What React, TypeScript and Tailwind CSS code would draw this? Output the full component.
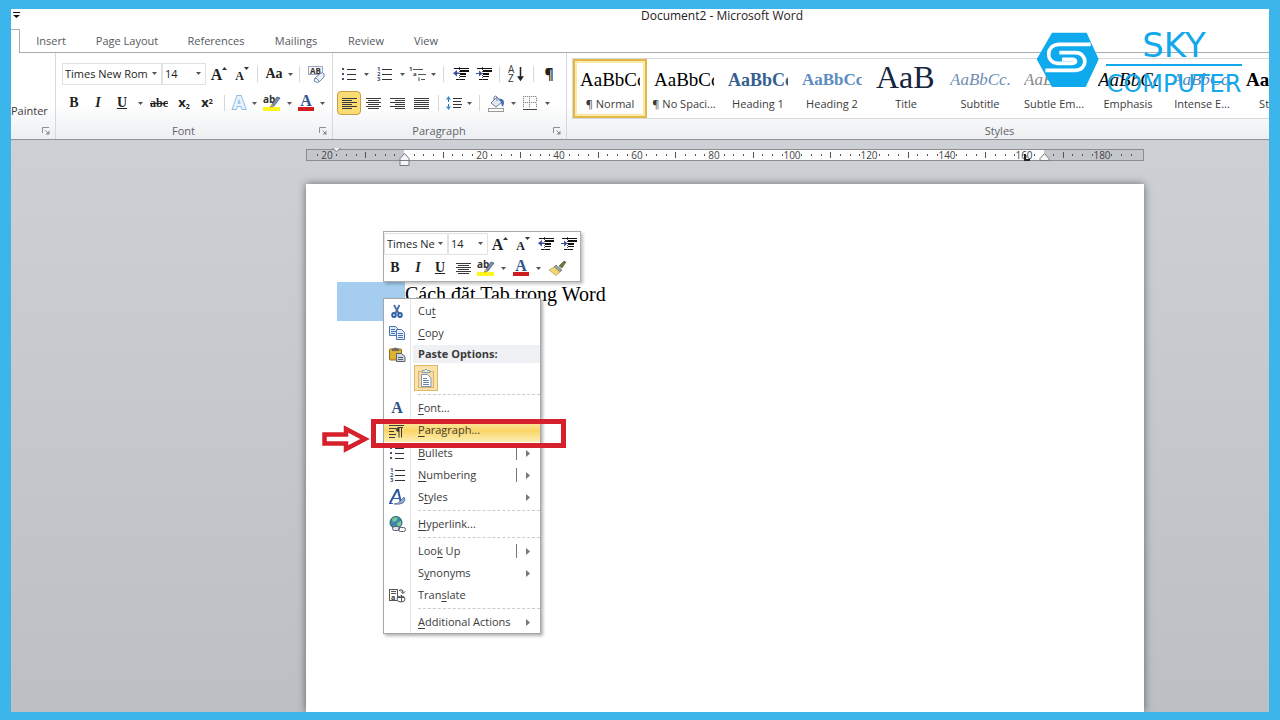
import React from 'react';
import clsx from 'clsx';

const SERIF = 'font-["Liberation_Serif",serif]';

const Arrow = ({className}: { className?: string }) => (
    <button aria-label="More options" className={clsx("flex h-6 items-center justify-center", className)}>
        <svg width="5" height="3" viewBox="0 0 5 3"><path d="M0 0h5L2.5 3z" fill="#555"/></svg>
    </button>
)

interface ToolProps {
    label: string
    className?: string
    active?: boolean
    children: React.ReactNode
}

const Tool = ({label, className, active, children}: ToolProps) => (
    <button aria-label={label} className={clsx("flex h-6 shrink-0 items-center justify-center text-[#222]",
        active && "rounded-sm border border-[#c9a04a] bg-[#fbdc74]", className)}>
        {children}
    </button>
)

const Sep = ({className}: { className?: string }) => (
    <div className={clsx("flex h-4 shrink-0 justify-center", className)}>
        <div className="w-px bg-[#d5d7da]"/>
    </div>
)

interface ComboProps {
    label: string
    value: string
    className?: string
}

const Combo = ({label, value, className}: ComboProps) => (
    <div className={clsx("relative flex h-[22px] shrink-0 border border-[#dfe1e4] bg-white", className)}>
        <select aria-label={label} defaultValue={value}
                className="w-full appearance-none overflow-hidden bg-transparent pl-[2px] pr-3 text-[11px] text-[#1e1e1e]">
            <option>{value}</option>
        </select>
        <svg className="pointer-events-none absolute right-1 top-2" width="5" height="3" viewBox="0 0 5 3">
            <path d="M0 0h5L2.5 3z" fill="#555"/>
        </svg>
    </div>
)

const Letter = ({children, className}: { children: React.ReactNode, className?: string }) => (
    <span className={clsx(SERIF, "leading-none", className)}>{children}</span>
)

const GrowIcon = () => (
    <span className="flex items-start">
        <Letter className="pt-[2px] text-[16px] font-bold">A</Letter>
        <svg width="5" height="5" viewBox="0 0 5 5"><path d="M0 5h5L2.5 2z" fill="#333"/></svg>
    </span>
)

const ShrinkIcon = () => (
    <span className="flex items-start">
        <Letter className="pt-1 text-[12px] font-bold">A</Letter>
        <svg width="5" height="5" viewBox="0 0 5 5"><path d="M0 1h5L2.5 4z" fill="#333"/></svg>
    </span>
)

const HighlightIcon = () => (
    <svg width="18" height="18" viewBox="0 0 18 18">
        <rect y="13" width="17" height="4" fill="#fdf51d"/>
        <text x="0" y="9" fontSize="10" fontWeight="bold" fontFamily="Open Sans, sans-serif" fill="#333">ab</text>
        <path d="M8 12l6-9 3 1-6 8-4 1z" fill="#7f93b5" stroke="#3b4a66" strokeWidth=".7"/>
        <path d="M7 13l1.500-3 2 2z" fill="#e3b93a"/>
    </svg>
)

const FontColorIcon = () => (
    <svg width="18" height="18" viewBox="0 0 18 18">
        <rect x="1" y="13" width="16" height="4" fill="#d01c1f"/>
        <text x="9" y="12" textAnchor="middle" fontSize="16" fontWeight="bold" fontFamily="Liberation Serif, serif"
              fill="#2f5290">A</text>
    </svg>
)

const ClearIcon = () => (
    <svg width="18" height="18" viewBox="0 0 18 18">
        <rect x=".5" y="1.500" width="14" height="8" fill="#f4f6fa" stroke="#9aa7c2"/>
        <text x="7.500" y="8.500" textAnchor="middle" fontSize="8" fontWeight="bold" fontFamily="Open Sans, sans-serif"
              fill="#333">AB</text>
        <path d="M7 13l6-5q2-1 3 1v3l-5 5q-3 1-5-1z" fill="#eef1f8" stroke="#7484ad"/>
        <path d="M7 13q2 0 4 3" fill="none" stroke="#7484ad"/>
    </svg>
)

const OutlineA = () => (
    <svg width="18" height="18" viewBox="0 0 18 18">
        <text x="9" y="15" textAnchor="middle" fontSize="18" fontWeight="bold" fontFamily="Open Sans, sans-serif"
              fill="#eaf4fd" stroke="#8dbce4" strokeWidth="2" paintOrder="stroke">A</text>
    </svg>
)

const BulletsIcon = () => (
    <svg width="14" height="14" viewBox="0 0 14 14">
        {[2, 7, 12].map((y) => (
            <g key={y}>
                <rect y={y - 1} width="2" height="2" fill="#44546f"/>
                <path d={`M5 ${y + .5}h9`} stroke="#333"/>
            </g>
        ))}
    </svg>
)

const NumberingIcon = () => (
    <svg width="15" height="15" viewBox="0 0 15 15">
        {[2, 7, 12].map((y, i) => (
            <g key={y}>
                <text x="0" y={y + 2} fontSize="6" fontWeight="bold" fontFamily="Open Sans, sans-serif"
                      fill="#3a4d78">{i + 1}</text>
                <path d={`M5 ${y + .5}h10`} stroke="#333"/>
            </g>
        ))}
    </svg>
)

const MultilevelIcon = () => (
    <svg width="18" height="16" viewBox="0 0 18 16">
        <g fontSize="6" fontWeight="bold" fontFamily="Open Sans, sans-serif" fill="#444">
            <text x="0" y="5">1</text>
            <text x="4" y="10">a</text>
            <text x="9" y="15">i</text>
        </g>
        <path d="M4 3.500h10M9 8.500h8M12 13.500h4" stroke="#555"/>
    </svg>
)

const IndentIcon = ({right}: { right?: boolean }) => (
    <svg width="16" height="14" viewBox="0 0 16 14">
        <path d="M1 1.500h15M7 9.500h6M3 12.500h9" stroke="#111"/>
        <path d="M7 4h9M7 7h6" stroke="#111" strokeWidth="2"/>
        <path d="M6.500 0v14" stroke="#555" strokeDasharray="1 1"/>
        <path d={right ? "M0 6h3V3.500L6.500 6.500 3 9.500V7H0z" : "M6.500 5.500H4V3L0 6.300 4 9.500V7h2.500z"} fill="#3f4fa0"/>
    </svg>
)

const SortIcon = () => (
    <svg width="16" height="18" viewBox="0 0 16 18">
        <text x="0" y="8" fontSize="10" fontFamily="Open Sans, sans-serif" fill="#333">A</text>
        <text x="0" y="17" fontSize="10" fontFamily="Open Sans, sans-serif" fill="#333">Z</text>
        <path d="M12.500 2v12M10.500 12l2 3 2-3z" stroke="#222" strokeWidth="1.500" fill="#222"/>
    </svg>
)

type Align = "left" | "center" | "right" | "justify"

const ALIGN_PATHS: Record<Align, string> = {
    left: "M0 .5h15M0 2.500h10M0 4.500h15M0 6.500h10M0 8.500h15M0 10.500h10",
    center: "M0 .5h15M2 2.500h11M0 4.500h15M2 6.500h11M0 8.500h15M2 10.500h11",
    right: "M0 .5h15M5 2.500h10M0 4.500h15M5 6.500h10M0 8.500h15M5 10.500h10",
    justify: "M0 .5h15M0 2.500h15M0 4.500h15M0 6.500h15M0 8.500h15M0 10.500h15",
}

const AlignIcon = ({align}: { align: Align }) => (
    <svg width="15" height="11" viewBox="0 0 15 11"><path d={ALIGN_PATHS[align]} stroke="#3a3a3a"/></svg>
)

const SpacingIcon = () => (
    <svg width="16" height="16" viewBox="0 0 16 16">
        <path d="M2.500 4v3M2.500 9v3" stroke="#3a6ea8"/>
        <path d="M0 4.500L2.500 1 5 4.500zM0 11.500L2.500 15 5 11.500z" fill="#3a8cc8"/>
        <path d="M7 3.500h9M7 6.500h8M7 9.500h9M7 12.500h8" stroke="#333"/>
    </svg>
)

const ShadingIcon = () => (
    <svg width="18" height="17" viewBox="0 0 18 17">
        <path d="M3 8l6-6 5 5-6 5z" fill="#e4e9f1" stroke="#6c7c98"/>
        <path d="M6 5V2q1-2 3 0v4" fill="none" stroke="#6c7c98"/>
        <path d="M10 4q6-1 6 4l-1 4q-2-2-2-5z" fill="#3e6eb4"/>
        <rect x=".5" y="13.500" width="15" height="3" fill="#fff" stroke="#999"/>
    </svg>
)

const BorderIcon = () => (
    <svg width="14" height="14" viewBox="0 0 14 14">
        <path d="M.5 0v12M6.500 0v12M13.500 0v12M0 .5h14M0 6.500h14" stroke="#8a8a8a" strokeDasharray="1 1"/>
        <path d="M.5 0v12M6.500 0v12M13.500 0v12M0 .5h14M0 6.500h14" stroke="#dcdcdc" strokeDasharray="1 1" strokeDashoffset="1"/>
        <path d="M0 13.500h14" stroke="#444"/>
    </svg>
)

const LaunchIcon = () => (
    <svg width="8" height="8" viewBox="0 0 8 8">
        <path d="M.5 6V.5H7M3.500 3.500L6 6" fill="none" stroke="#8d9196"/>
        <path d="M7.500 3.500v4h-4z" fill="#8d9196"/>
    </svg>
)

const BrushIcon = () => (
    <svg width="17" height="15" viewBox="0 0 17 15">
        <path d="M10 5l5-5 2 1-4 6z" fill="#6f7a3a" stroke="#4d5628" strokeWidth=".6"/>
        <path d="M7 4l6 5-2 2-6-5z" fill="#8fa8a0" stroke="#55685f" strokeWidth=".6"/>
        <path d="M5 6l6 5-4 3.500L0 9z" fill="#f2d777" stroke="#a58a35" strokeWidth=".6"/>
    </svg>
)

const ScissorsIcon = () => (
    <svg width="12" height="14" viewBox="0 0 12 14" fill="none" stroke="#3060a8">
        <path d="M3 1l4.500 8M8.500 1L4.500 9" stroke="#4a6ea8" strokeWidth="1.800"/>
        <ellipse cx="3" cy="11" rx="1.800" ry="2" strokeWidth="2"/>
        <ellipse cx="9" cy="11" rx="1.800" ry="2" strokeWidth="2"/>
    </svg>
)

const CopyIcon = () => (
    <svg width="16" height="14" viewBox="0 0 16 14" stroke="#4d74b2">
        <path d="M.5.5h6l2 2v7h-8z" fill="#dfe9f8"/>
        <path d="M2 3.500h4M2 5.500h5M2 7.500h4"/>
        <path d="M7.500 3.500h5l3 3v7h-8z" fill="#e9f0fb"/>
        <path d="M9 7.500h5M9 9.500h5M9 11.500h5"/>
    </svg>
)

const PasteIcon = () => (
    <svg width="17" height="15" viewBox="0 0 17 15">
        <rect x=".5" y="2" width="12" height="11" rx="1" fill="#e0b232" stroke="#8c6d1a"/>
        <path d="M3 3V1.500h2q1.500-2 3 0h2V4H3z" fill="#6c6a5c"/>
        <path d="M7.500 6.500h5l3.500 3v5H7.500z" fill="#cfd6df" stroke="#55606f"/>
        <path d="M9 10.500h5M9 12.500h5" stroke="#55606f"/>
    </svg>
)

const ClipboardIcon = () => (
    <svg width="16" height="20" viewBox="0 0 16 20">
        <rect x=".5" y="3.500" width="15" height="16" fill="#f5deab" stroke="#d9b46a"/>
        <path d="M4 4.500V2.500h2.500q1.500-3 3 0H12v2z" fill="#e6edf0" stroke="#86a0a8"/>
        <path d="M3.500 6.500h6l3.500 3.500v8.500H3.500z" fill="#fff" stroke="#8195b4"/>
        <path d="M5 10.500h4M5 12.500h6M5 14.500h6M5 16.500h6" stroke="#6b84b0"/>
    </svg>
)

const ParagraphIcon = () => (
    <svg width="16" height="14" viewBox="0 0 16 14">
        <path d="M0 1.500h15M0 4.500h7M0 7.500h5M0 10.500h7M0 13.500h6" stroke="#3c3c3c"/>
        <path d="M10 3.500v10M12.500 3.500v10M14 3.500h-5" stroke="#3c3c3c"/>
        <path d="M10 3q-3 .5-3 2.500T10 8z" fill="#3c3c3c"/>
    </svg>
)

const StylesIcon = () => (
    <svg width="17" height="16" viewBox="0 0 17 16">
        <path d="M1 14L8 1h1l3 13" fill="none" stroke="#2f57a0" strokeWidth="2"/>
        <path d="M4 9.500h7M0 14.500h4" stroke="#2f57a0"/>
        <path d="M5 15q5 0 7-4l3-3 1 3-2 3q-4 2-9 1z" fill="#8fa9cf" stroke="#44608f" strokeWidth=".7"/>
    </svg>
)

const GlobeIcon = () => (
    <svg width="17" height="16" viewBox="0 0 17 16">
        <circle cx="7" cy="6.500" r="6" fill="#3e86a8" stroke="#29607c"/>
        <path d="M3 3q3-3 6-1l-2 3-3 1zM8 7l4-2v4l-3 2z" fill="#7ccb8f"/>
        <g fill="#dfe3e8" stroke="#555f6c">
            <rect x="3.500" y="10.500" width="7" height="4" rx="2"/>
            <rect x="9.500" y="11.500" width="7" height="4" rx="2" fill="none"/>
        </g>
    </svg>
)

const TranslateIcon = () => (
    <svg width="17" height="15" viewBox="0 0 17 15">
        <rect x=".5" y="1.500" width="8" height="11" fill="#fff" stroke="#555"/>
        <path d="M2 3.500h5M2 5.500h5" stroke="#555"/>
        <text x="2" y="12" fontSize="7" fontWeight="bold" fontFamily="Open Sans, sans-serif" fill="#333">a</text>
        <path d="M10 2.500q4-2 4 2M12 3.500l2 2 2-2" fill="none" stroke="#333"/>
        <ellipse cx="12" cy="11" rx="4" ry="3" fill="#fff" stroke="#555"/>
        <path d="M12.500 7v7M9 9.500h6" stroke="#555"/>
    </svg>
)

const GroupLabel = ({label, launch}: { label: string, launch?: boolean }) => (
    <div className="flex h-4 items-center text-[11px] text-[#5f6369]">
        <span className="flex-1 pr-2 text-center">{label}</span>
        {launch && (
            <button aria-label={`${label || "Clipboard"} settings`} className="mr-[5px]">
                <LaunchIcon/>
            </button>
        )}
    </div>
)

interface StyleItem {
    name: string
    sample: string
    className: string
    active?: boolean
}

const STYLES: StyleItem[] = [
    {name: "¶ Normal", sample: "AaBbCc", className: "text-[19px] text-black", active: true},
    {name: "¶ No Spaci...", sample: "AaBbCc", className: "text-[19px] text-black"},
    {name: "Heading 1", sample: "AaBbCc", className: "text-[18px] font-bold text-[#365f91]"},
    {name: "Heading 2", sample: "AaBbCc", className: "text-[17px] font-bold text-[#5c8cc0]"},
    {name: "Title", sample: "AaB", className: "text-[32px] text-[#17263d]"},
    {name: "Subtitle", sample: "AaBbCc.", className: "text-[17px] italic text-[#6f8db3]"},
    {name: "Subtle Em...", sample: "AaBbCc.", className: "text-[17px] italic text-[#8a8a8a]"},
    {name: "Emphasis", sample: "AaBbCc", className: "text-[19px] italic text-black"},
    {name: "Intense E...", sample: "AaBbCc.", className: "text-[17px] italic text-[#4f81bd]"},
    {name: "Strong", sample: "AaBbCc", className: "text-[19px] font-bold text-black"},
]

const StyleCard = ({name, sample, className, active}: StyleItem) => (
    <button className={clsx("flex w-[74px] shrink-0 flex-col items-center",
        active ? "border-2 border-[#e3b84b] bg-white shadow-[inset_0_0_0_2px_#fbe9a6]" : "border-2 border-transparent")}>
        <span className={clsx(SERIF, "h-9 w-[60px] overflow-hidden whitespace-nowrap text-left",
            sample === "AaB" ? "leading-8" : "leading-[38px]", className)}>{sample}</span>
        <span className="whitespace-nowrap text-[11px] leading-[14px] text-[#3b3b3b]">{name}</span>
    </button>
)

const Ribbon = () => (
    <div className="flex h-[87px] border-b border-[#8f9398] bg-linear-to-b from-white from-60% to-[#eceef1]">
        <div className="flex w-[45px] shrink-0 flex-col justify-between border-r border-[#d5d8dc]">
            <span className="pt-[50px] text-[11px] leading-4 text-[#3b3b3b]">Painter</span>
            <GroupLabel label="" launch/>
        </div>
        <div className="flex w-[277px] shrink-0 flex-col justify-between border-r border-[#d5d8dc]">
            <div className="flex flex-col gap-[5px] pl-[6px] pt-[9px]">
                <div className="flex h-6 items-center">
                    <Combo label="Font" value="Times New Rom" className="w-[100px]"/>
                    <Combo label="Font size" value="14" className="w-[44px]"/>
                    <Tool label="Grow font" className="w-[26px]"><GrowIcon/></Tool>
                    <Tool label="Shrink font" className="w-[20px]"><ShrinkIcon/></Tool>
                    <Sep className="w-[10px]"/>
                    <Tool label="Change case" className="w-[24px]">
                        <Letter className="text-[14px] font-bold">Aa</Letter>
                    </Tool>
                    <Arrow className="w-[8px]"/>
                    <Sep className="w-[10px]"/>
                    <Tool label="Clear formatting" className="w-[26px]"><ClearIcon/></Tool>
                </div>
                <div className="flex h-6 items-center">
                    <Tool label="Bold" className="w-6"><Letter className="text-[14px] font-bold">B</Letter></Tool>
                    <Tool label="Italic" className="w-6"><Letter className="text-[14px] font-bold italic">I</Letter></Tool>
                    <Tool label="Underline" className="w-6">
                        <Letter className="text-[14px] font-bold underline">U</Letter>
                    </Tool>
                    <Arrow className="w-3"/>
                    <Tool label="Strikethrough" className="w-[26px]">
                        <Letter className="text-[12px] font-bold line-through">abc</Letter>
                    </Tool>
                    <Tool label="Subscript" className="w-6">
                        <span className="text-[13px] font-bold">x<sub className="text-[7px]">2</sub></span>
                    </Tool>
                    <Tool label="Superscript" className="w-[22px]">
                        <span className="text-[13px] font-bold">x<sup className="text-[7px]">2</sup></span>
                    </Tool>
                    <Sep className="w-3"/>
                    <Tool label="Text effects" className="w-[18px]"><OutlineA/></Tool>
                    <Arrow className="w-3"/>
                    <Tool label="Highlight" className="w-6"><HighlightIcon/></Tool>
                    <Arrow className="w-[10px]"/>
                    <Tool label="Font color" className="w-6"><FontColorIcon/></Tool>
                    <Arrow className="w-2"/>
                </div>
            </div>
            <GroupLabel label="Font" launch/>
        </div>
        <div className="flex w-[234px] shrink-0 flex-col justify-between border-r border-[#d5d8dc]">
            <div className="flex flex-col gap-[5px] pl-1 pt-[9px]">
                <div className="flex h-6 items-center">
                    <Tool label="Bullets" className="w-6"><BulletsIcon/></Tool>
                    <Arrow className="w-[10px]"/>
                    <Tool label="Numbering" className="w-[26px]"><NumberingIcon/></Tool>
                    <Arrow className="w-[10px]"/>
                    <Tool label="Multilevel list" className="w-[22px]"><MultilevelIcon/></Tool>
                    <Arrow className="w-2"/>
                    <Sep className="w-3"/>
                    <Tool label="Decrease indent" className="w-6"><IndentIcon/></Tool>
                    <Tool label="Increase indent" className="w-[22px]"><IndentIcon right/></Tool>
                    <Sep className="w-2"/>
                    <Tool label="Sort" className="w-[26px]"><SortIcon/></Tool>
                    <Sep className="w-2"/>
                    <Tool label="Show marks" className="w-6">
                        <span className="text-[14px] font-bold leading-none">¶</span>
                    </Tool>
                </div>
                <div className="flex h-6 items-center">
                    <Tool label="Align left" className="w-6" active><AlignIcon align="left"/></Tool>
                    <Tool label="Center" className="w-6"><AlignIcon align="center"/></Tool>
                    <Tool label="Align right" className="w-6"><AlignIcon align="right"/></Tool>
                    <Tool label="Justify" className="w-6"><AlignIcon align="justify"/></Tool>
                    <Sep className="w-[10px]"/>
                    <Tool label="Line spacing" className="w-[22px]"><SpacingIcon/></Tool>
                    <Arrow className="w-2"/>
                    <Sep className="w-3"/>
                    <Tool label="Shading" className="w-6"><ShadingIcon/></Tool>
                    <Arrow className="w-2"/>
                    <Tool label="Borders" className="w-[26px]"><BorderIcon/></Tool>
                    <Arrow className="w-2"/>
                </div>
            </div>
            <GroupLabel label="Paragraph" launch/>
        </div>
        <div className="flex min-w-0 flex-1 flex-col justify-between pl-[5px] pt-[5px]">
            <div className="flex h-[61px] overflow-hidden border-y border-l border-[#d5d8dc] bg-white">
                {STYLES.map((style) => <StyleCard key={style.name} {...style}/>)}
            </div>
            <div className="pl-[166px]">
                <GroupLabel label="Styles"/>
            </div>
        </div>
    </div>
)

const UNIT = 77.5
const ZERO = 98

const Ruler = () => {
    const ticks = []
    for (let i = -9; i <= 75; i++) {
        if (i % 8 === 0) continue
        const x = Math.round(ZERO + i * UNIT / 8)
        if (x < 3 || x > 836) continue
        ticks.push(<rect key={i} x={x} y={i % 4 === 0 ? 4 : 6} width="1" height={i % 4 === 0 ? 6 : 2} fill="#555"/>)
    }
    return (
        <svg width="838" height="20" viewBox="0 0 838 20" className="block">
            <rect x=".5" y="1.500" width="837" height="11" fill="#c3c7cc" stroke="#8a8e93"/>
            <rect x="98" y="2" width="640" height="10" fill="#fdfdfd"/>
            {ticks}
            <g fontSize="10" fontFamily="Open Sans, sans-serif" fill="#444" textAnchor="middle">
                {[-1, 1, 2, 3, 4, 5, 6, 7, 8, 9].map((n) => (
                    <text key={n} x={Math.round(ZERO + n * UNIT)} y="11">{Math.abs(n) * 20}</text>
                ))}
            </g>
            <g fill="#f4f5f6" stroke="#777b80">
                <path d="M26 -3.500h9v3l-4.500 4L26 -.5z"/>
                <path d="M98.500 5.500l4.500 5v7h-9v-7zM94 12.500h9"/>
                <path d="M738.500 5.500l4.500 5v2h-9v-2z"/>
            </g>
            <path d="M719 6v6h5" fill="none" stroke="#222" strokeWidth="2"/>
        </svg>
    )
}

const MiniToolbar = () => (
    <div className="absolute left-[77px] top-[47px] flex w-[198px] flex-col border border-[#a9adb2] bg-white pb-px shadow-[2px_2px_3px_rgba(0,0,0,0.25)]">
        <div className="flex h-6 items-center">
            <Combo label="Mini font" value="Times New" className="w-[64px]"/>
            <Combo label="Mini font size" value="14" className="w-10"/>
            <Tool label="Grow" className="w-6"><GrowIcon/></Tool>
            <Tool label="Shrink" className="w-[22px]"><ShrinkIcon/></Tool>
            <Tool label="Decrease indent" className="w-6"><IndentIcon/></Tool>
            <Tool label="Increase indent" className="w-[22px]"><IndentIcon right/></Tool>
        </div>
        <div className="flex h-6 items-center">
            <Tool label="Bold" className="w-[22px]"><Letter className="text-[14px] font-bold">B</Letter></Tool>
            <Tool label="Italic" className="w-6"><Letter className="text-[14px] font-bold italic">I</Letter></Tool>
            <Tool label="Underline" className="w-5">
                <Letter className="text-[14px] font-bold underline">U</Letter>
            </Tool>
            <Tool label="Center" className="w-[26px]"><AlignIcon align="center"/></Tool>
            <Tool label="Highlight" className="w-5"><HighlightIcon/></Tool>
            <Arrow className="w-[14px]"/>
            <Tool label="Font color" className="w-[22px]"><FontColorIcon/></Tool>
            <Arrow className="w-3"/>
            <Tool label="Format painter" className="w-[26px]"><BrushIcon/></Tool>
        </div>
    </div>
)

interface MenuRowProps {
    text: string
    // index of the access key letter
    hot: number
    icon?: React.ReactNode
    sub?: boolean
    split?: boolean
    active?: boolean
}

const MenuRow = ({text, hot, icon, sub, split, active}: MenuRowProps) => (
    <button className={clsx("flex w-full items-center text-left text-[11px] text-[#3b3b3b]",
        active ? "h-[23px] bg-linear-to-b from-[#fdeeb5] via-[#fad667] to-[#fdeeb0]" : "h-[22px]")}>
        <span className="flex w-[26px] justify-center">{icon}</span>
        <span className="flex-1 whitespace-nowrap pl-2">
            {text.slice(0, hot)}<span className="underline underline-offset-2">{text[hot]}</span>{text.slice(hot + 1)}
        </span>
        {split && <span className="mr-[9px] h-[14px] w-px bg-[#777]"/>}
        {(sub || split) && (
            <svg className="mr-[10px]" width="4" height="7" viewBox="0 0 4 7"><path d="M0 0v7l4-3.500z" fill="#777"/></svg>
        )}
    </button>
)

const Divider = () => <div className="my-[2px] ml-[34px] border-t border-dashed border-[#c9ccd0]"/>

const ContextMenu = () => (
    <div className="absolute left-[77px] top-[114px] w-[158px] border border-[#a3a6aa] bg-white bg-[linear-gradient(to_right,transparent_26px,#e2e4e7_26px,#e2e4e7_27px,transparent_27px)] pt-px shadow-[2px_2px_3px_rgba(0,0,0,0.3)]">
        <MenuRow text="Cut" hot={2} icon={<ScissorsIcon/>}/>
        <MenuRow text="Copy" hot={0} icon={<CopyIcon/>}/>
        <div className="flex h-5 items-center text-[11px] font-bold text-[#3b3b3b]">
            <span className="flex w-[26px] justify-center"><PasteIcon/></span>
            <span className="ml-[3px] flex-1 bg-[#eff1f4] pl-[5px] leading-[18px]">Paste Options:</span>
        </div>
        <div className="flex h-7 items-center pl-[30px]">
            <button aria-label="Keep source formatting"
                    className="flex h-[26px] w-6 items-center justify-center border border-[#dcb968] bg-[#fbe3ab]">
                <ClipboardIcon/>
            </button>
        </div>
        <Divider/>
        <MenuRow text="Font..." hot={0} icon={<Letter className="text-[16px] font-bold text-[#2f4f8a]">A</Letter>}/>
        <MenuRow text="Paragraph..." hot={0} icon={<ParagraphIcon/>} active/>
        <MenuRow text="Bullets" hot={0} icon={<BulletsIcon/>} split/>
        <MenuRow text="Numbering" hot={0} icon={<NumberingIcon/>} split/>
        <MenuRow text="Styles" hot={1} icon={<StylesIcon/>} sub/>
        <Divider/>
        <MenuRow text="Hyperlink..." hot={0} icon={<GlobeIcon/>}/>
        <Divider/>
        <MenuRow text="Look Up" hot={3} split/>
        <MenuRow text="Synonyms" hot={1} sub/>
        <MenuRow text="Translate" hot={4} icon={<TranslateIcon/>}/>
        <Divider/>
        <MenuRow text="Additional Actions" hot={0} sub/>
    </div>
)

const Watermark = () => (
    <div className="pointer-events-none absolute right-[27px] top-[17px] flex items-start text-[#12a8ec]">
        <svg width="76" height="68" viewBox="0 0 228 204">
            <path d="M66 20h104l36 80-39 83H66L20 100z" fill="#0fa9ee"/>
            <g fill="none" stroke="#fff" strokeWidth="11">
                <path d="M182 55H88C46 55 46 112 84 112h42c14 0 14-12 0-12H96"/>
                <path d="M88 80h48c38 0 38 53 0 53H46"/>
            </g>
        </svg>
        <div className={'flex w-[136px] flex-col items-center font-["DejaVu_Sans",sans-serif]'}>
            <span className="text-[34px] leading-[38px]">SKY</span>
            <span className="h-[2px] w-full bg-[#12a8ec]"/>
            <span className="text-[24px] leading-9">COMPUTER</span>
        </div>
    </div>
)

const TABS = [
    {name: "Insert", className: "w-[60px]"},
    {name: "Page Layout", className: "w-[92px]"},
    {name: "References", className: "w-[86px]"},
    {name: "Mailings", className: "w-[74px]"},
    {name: "Review", className: "w-[66px]"},
    {name: "View", className: "w-[54px]"},
]

const App = () => (
    <div className={'flex min-h-screen flex-col bg-[#3bb5ea] px-[11px] pb-2 pt-[9px] font-["Open_Sans","Noto_Sans",sans-serif]'}>
        <div className="relative flex flex-1 flex-col overflow-hidden bg-white">
            <header className="flex h-5 items-start">
                <button aria-label="Customize toolbar" className="pl-[2px] pt-[3px]">
                    <svg width="7" height="6" viewBox="0 0 7 6"><path d="M0 0h7v1H0zM0 3h7L3.500 6z" fill="#111"/></svg>
                </button>
                <h1 className="flex-1 pl-[155px] text-center text-[12px] leading-[14px] text-[#222]">Document2 - Microsoft Word</h1>
            </header>
            <nav className="flex h-6 shrink-0">
                <div className="w-[9px] border-r border-t border-[#a9adb2]"/>
                <div className="flex flex-1 border-b border-[#a9adb2] pt-px pl-px">
                    {TABS.map((tab) => (
                        <button key={tab.name}
                                className={clsx("shrink-0 whitespace-nowrap text-center text-[11px] text-[#55595e]", tab.className)}>
                            {tab.name}
                        </button>
                    ))}
                </div>
            </nav>
            <Ribbon/>
            <main className="flex flex-1 flex-col bg-linear-to-b from-[#cdd1d5] to-[#bcc0c4] pl-[295px] pr-[125px] pt-2">
                <div className="h-9"><Ruler/></div>
                <article className="relative flex-1 bg-white shadow-[0_0_8px_rgba(0,0,0,0.5)]">
                    <div className="flex items-start pl-[31px] pt-[98px]">
                        <div className="h-[39px] w-[68px] bg-[#a5cdf0]"/>
                        <p className={clsx(SERIF, "whitespace-nowrap text-[20px] leading-6 text-black")}>Cách đặt Tab trong Word</p>
                    </div>
                    <MiniToolbar/>
                    <ContextMenu/>
                    <div className="pointer-events-none absolute left-[65px] top-[235px] h-[29px] w-[195px] border-[5px] border-[#d6202c]"/>
                    <svg className="absolute left-[16px] top-[241px]" width="48" height="28" viewBox="0 0 48 28">
                        <path d="M2.500 9.500H24V4l19 10L24 24V18.500H2.500z" fill="#fff" stroke="#d6202c" strokeWidth="4.500"/>
                    </svg>
                </article>
            </main>
            <Watermark/>
        </div>
    </div>
);

export default App;
